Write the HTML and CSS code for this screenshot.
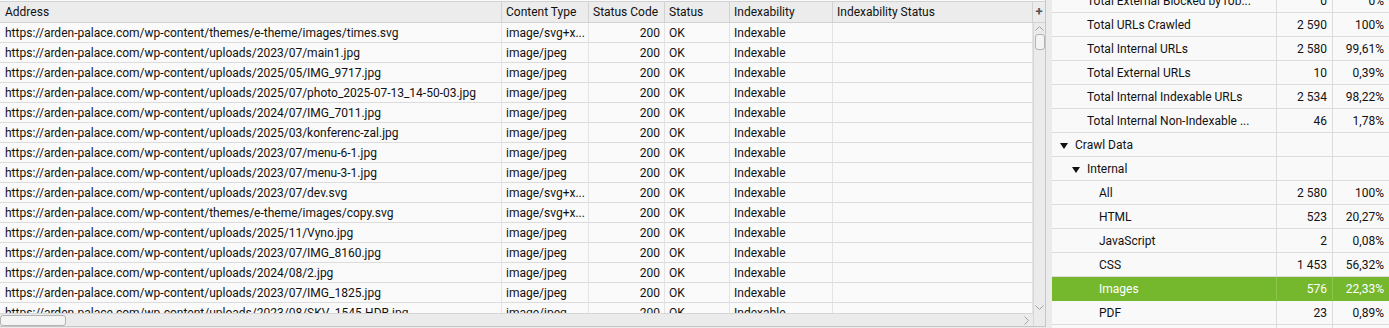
FILE: index.html
```html
<!DOCTYPE html>
<html lang="en">
<head>
  <meta charset="UTF-8">
  <title>Crawl Results</title>
  <link rel="stylesheet" href="styles.css">
</head>
<body>
  <div class="app">
    <section class="grid-pane">
      <div class="head">
        <div class="cell c-addr">Address</div>
        <div class="cell c-type">Content Type</div>
        <div class="cell c-code">Status Code</div>
        <div class="cell c-status">Status</div>
        <div class="cell c-idx">Indexability</div>
        <div class="cell c-idxs">Indexability Status</div>
      </div>
      <div class="head-plus">+</div>

      <div class="rows">
        <div class="row"><div class="cell c-addr">https://arden-palace.com/wp-content/themes/e-theme/images/times.svg</div><div class="cell c-type">image/svg+x...</div><div class="cell c-code num">200</div><div class="cell c-status">OK</div><div class="cell c-idx">Indexable</div><div class="cell c-idxs"></div></div>
        <div class="row"><div class="cell c-addr">https://arden-palace.com/wp-content/uploads/2023/07/main1.jpg</div><div class="cell c-type">image/jpeg</div><div class="cell c-code num">200</div><div class="cell c-status">OK</div><div class="cell c-idx">Indexable</div><div class="cell c-idxs"></div></div>
        <div class="row"><div class="cell c-addr">https://arden-palace.com/wp-content/uploads/2025/05/IMG_9717.jpg</div><div class="cell c-type">image/jpeg</div><div class="cell c-code num">200</div><div class="cell c-status">OK</div><div class="cell c-idx">Indexable</div><div class="cell c-idxs"></div></div>
        <div class="row"><div class="cell c-addr">https://arden-palace.com/wp-content/uploads/2025/07/photo_2025-07-13_14-50-03.jpg</div><div class="cell c-type">image/jpeg</div><div class="cell c-code num">200</div><div class="cell c-status">OK</div><div class="cell c-idx">Indexable</div><div class="cell c-idxs"></div></div>
        <div class="row"><div class="cell c-addr">https://arden-palace.com/wp-content/uploads/2024/07/IMG_7011.jpg</div><div class="cell c-type">image/jpeg</div><div class="cell c-code num">200</div><div class="cell c-status">OK</div><div class="cell c-idx">Indexable</div><div class="cell c-idxs"></div></div>
        <div class="row"><div class="cell c-addr">https://arden-palace.com/wp-content/uploads/2025/03/konferenc-zal.jpg</div><div class="cell c-type">image/jpeg</div><div class="cell c-code num">200</div><div class="cell c-status">OK</div><div class="cell c-idx">Indexable</div><div class="cell c-idxs"></div></div>
        <div class="row"><div class="cell c-addr">https://arden-palace.com/wp-content/uploads/2023/07/menu-6-1.jpg</div><div class="cell c-type">image/jpeg</div><div class="cell c-code num">200</div><div class="cell c-status">OK</div><div class="cell c-idx">Indexable</div><div class="cell c-idxs"></div></div>
        <div class="row"><div class="cell c-addr">https://arden-palace.com/wp-content/uploads/2023/07/menu-3-1.jpg</div><div class="cell c-type">image/jpeg</div><div class="cell c-code num">200</div><div class="cell c-status">OK</div><div class="cell c-idx">Indexable</div><div class="cell c-idxs"></div></div>
        <div class="row"><div class="cell c-addr">https://arden-palace.com/wp-content/uploads/2023/07/dev.svg</div><div class="cell c-type">image/svg+x...</div><div class="cell c-code num">200</div><div class="cell c-status">OK</div><div class="cell c-idx">Indexable</div><div class="cell c-idxs"></div></div>
        <div class="row"><div class="cell c-addr">https://arden-palace.com/wp-content/themes/e-theme/images/copy.svg</div><div class="cell c-type">image/svg+x...</div><div class="cell c-code num">200</div><div class="cell c-status">OK</div><div class="cell c-idx">Indexable</div><div class="cell c-idxs"></div></div>
        <div class="row"><div class="cell c-addr">https://arden-palace.com/wp-content/uploads/2025/11/Vyno.jpg</div><div class="cell c-type">image/jpeg</div><div class="cell c-code num">200</div><div class="cell c-status">OK</div><div class="cell c-idx">Indexable</div><div class="cell c-idxs"></div></div>
        <div class="row"><div class="cell c-addr">https://arden-palace.com/wp-content/uploads/2023/07/IMG_8160.jpg</div><div class="cell c-type">image/jpeg</div><div class="cell c-code num">200</div><div class="cell c-status">OK</div><div class="cell c-idx">Indexable</div><div class="cell c-idxs"></div></div>
        <div class="row"><div class="cell c-addr">https://arden-palace.com/wp-content/uploads/2024/08/2.jpg</div><div class="cell c-type">image/jpeg</div><div class="cell c-code num">200</div><div class="cell c-status">OK</div><div class="cell c-idx">Indexable</div><div class="cell c-idxs"></div></div>
        <div class="row"><div class="cell c-addr">https://arden-palace.com/wp-content/uploads/2023/07/IMG_1825.jpg</div><div class="cell c-type">image/jpeg</div><div class="cell c-code num">200</div><div class="cell c-status">OK</div><div class="cell c-idx">Indexable</div><div class="cell c-idxs"></div></div>
        <div class="row"><div class="cell c-addr">https://arden-palace.com/wp-content/uploads/2023/08/SKV_1545-HDR.jpg</div><div class="cell c-type">image/jpeg</div><div class="cell c-code num">200</div><div class="cell c-status">OK</div><div class="cell c-idx">Indexable</div><div class="cell c-idxs"></div></div>
      </div>

      <div class="vscroll">
        <svg class="arrow" width="9" height="5" viewBox="0 0 9 5"><polyline points="0.5,4.5 4.5,0.5 8.5,4.5" /></svg>
        <div class="vthumb"></div>
        <div class="spacer"></div>
        <svg class="arrow" width="9" height="5" viewBox="0 0 9 5"><polyline points="0.5,0.5 4.5,4.5 8.5,0.5" /></svg>
      </div>

      <div class="hscroll">
        <div class="hthumb"></div>
        <svg class="arrow" width="5" height="9" viewBox="0 0 5 9"><polyline points="0.5,0.5 4.5,4.5 0.5,8.5" /></svg>
      </div>
      <div class="corner"></div>
    </section>

    <div class="divider"></div>

    <section class="tree">
      <div class="tree-list">
        <div class="node"><div class="label lvl1">Total External Blocked by rob...</div><div class="val">0</div><div class="val">0%</div></div>
        <div class="node"><div class="label lvl1">Total URLs Crawled</div><div class="val">2 590</div><div class="val">100%</div></div>
        <div class="node"><div class="label lvl1">Total Internal URLs</div><div class="val">2 580</div><div class="val">99,61%</div></div>
        <div class="node"><div class="label lvl1">Total External URLs</div><div class="val">10</div><div class="val">0,39%</div></div>
        <div class="node"><div class="label lvl1">Total Internal Indexable URLs</div><div class="val">2 534</div><div class="val">98,22%</div></div>
        <div class="node"><div class="label lvl1">Total Internal Non-Indexable ...</div><div class="val">46</div><div class="val">1,78%</div></div>
        <div class="node"><div class="label grp0"><svg class="caret" width="8" height="6" viewBox="0 0 8 6"><polygon points="0,0 8,0 4,6" /></svg>Crawl Data</div><div class="val"></div><div class="val"></div></div>
        <div class="node"><div class="label grp1"><svg class="caret" width="8" height="6" viewBox="0 0 8 6"><polygon points="0,0 8,0 4,6" /></svg>Internal</div><div class="val"></div><div class="val"></div></div>
        <div class="node"><div class="label lvl2">All</div><div class="val">2 580</div><div class="val">100%</div></div>
        <div class="node"><div class="label lvl2">HTML</div><div class="val">523</div><div class="val">20,27%</div></div>
        <div class="node"><div class="label lvl2">JavaScript</div><div class="val">2</div><div class="val">0,08%</div></div>
        <div class="node"><div class="label lvl2">CSS</div><div class="val">1 453</div><div class="val">56,32%</div></div>
        <div class="node selected"><div class="label lvl2">Images</div><div class="val">576</div><div class="val">22,33%</div></div>
        <div class="node"><div class="label lvl2">PDF</div><div class="val">23</div><div class="val">0,89%</div></div>
        <div class="node"><div class="label lvl2">Flash</div><div class="val">0</div><div class="val">0%</div></div>
      </div>
    </section>
  </div>
</body>
</html>
```

FILE: styles.css
```css
:root {
  --line: #dcdcdc;
  --head-bg: #ececec;
  --chrome: #ebebeb;
  --green: #75b72d;
}
* { box-sizing: border-box; }
body {
  margin: 0;
  font-family: Roboto, "Liberation Sans", sans-serif;
  font-size: 12px;
  color: #111;
  background: var(--chrome);
  overflow: hidden;
}
.app {
  display: flex;
  height: 328px;
}

/* left results table */
.grid-pane {
  display: grid;
  grid-template-columns: 1033px 12px;
  grid-template-rows: 22px 290px 13px;
  width: 1046px;
  height: 327px;
  padding-top: 1px;
  border-right: 1px solid #c6c6c6;
  border-bottom: 1px solid #c6c6c6;
  background: #fafafa;
}
.head {
  display: flex;
  background: var(--head-bg);
  border-top: 1px solid #d2d2d2;
  border-bottom: 1px solid #d2d2d2;
}
.head .cell {
  padding-top: 1px;
  line-height: 19px;
  border-right: 1px solid #d2d2d2;
}
.head-plus {
  background: var(--head-bg);
  border-top: 1px solid #d2d2d2;
  border-bottom: 1px solid #d2d2d2;
  color: #555;
  font-weight: bold;
  font-size: 13px;
  line-height: 20px;
  text-align: center;
}
.cell {
  flex: none;
  padding: 0 4px;
  white-space: nowrap;
  overflow: hidden;
}
.c-addr { width: 502px; padding-left: 5px; }
.c-type { width: 87px; }
.c-code { width: 76px; }
.c-status { width: 65px; }
.c-idx { width: 103px; }
.c-idxs { width: 200px; }
.num { text-align: right; }

.rows {
  overflow: hidden;
}
.row {
  display: flex;
  height: 20px;
  border-bottom: 1px solid var(--line);
}
.row .cell {
  padding-top: 1px;
  line-height: 19px;
  border-right: 1px solid #e4e4e4;
}

.vscroll {
  display: flex;
  flex-direction: column;
  align-items: center;
  background: var(--chrome);
  border-left: 1px solid #d6d6d6;
  padding: 3px 0 3px;
}
.vthumb {
  width: 10px;
  height: 16px;
  margin-top: 3px;
  border: 1px solid #b3b3b3;
  border-radius: 3px;
  background: #f4f4f4;
}
.spacer { flex: 1; }
.arrow {
  fill: none;
  stroke: #a2a2a2;
  stroke-width: 1;
}
.hscroll {
  display: flex;
  align-items: center;
  justify-content: space-between;
  padding: 0 4px 0 0;
  background: var(--chrome);
  border-top: 1px solid #d6d6d6;
}
.hthumb {
  width: 66px;
  height: 11px;
  border: 1px solid #b3b3b3;
  border-radius: 3px;
  background: #f4f4f4;
}
.corner {
  background: var(--chrome);
  border-left: 1px solid #d6d6d6;
}

.divider {
  width: 6px;
  flex: none;
}

/* right overview tree */
.tree {
  flex: 1;
  height: 328px;
  overflow: hidden;
  background: #f9f9f9;
}
.tree-list {
  margin-top: -11px;
}
.node {
  display: grid;
  grid-template-columns: 225px 56px 56px;
  height: 24px;
  border-bottom: 1px solid var(--line);
}
.node > div {
  padding-top: 1px;
  line-height: 22px;
  white-space: nowrap;
  overflow: hidden;
  border-right: 1px solid var(--line);
}
.node > div:last-child { border-right: none; }
.val {
  text-align: right;
  padding-right: 5px;
}
.lvl1 { padding-left: 35px; }
.lvl2 { padding-left: 47px; }
.grp0 { padding-left: 8px; }
.grp1 { padding-left: 20px; }
.caret {
  margin-right: 7px;
  vertical-align: 0;
  fill: #111;
}
.node.selected {
  background: var(--green);
  color: #fff;
  border-bottom-color: var(--green);
}
.node.selected > div { border-right-color: #8cc44c; }
```
